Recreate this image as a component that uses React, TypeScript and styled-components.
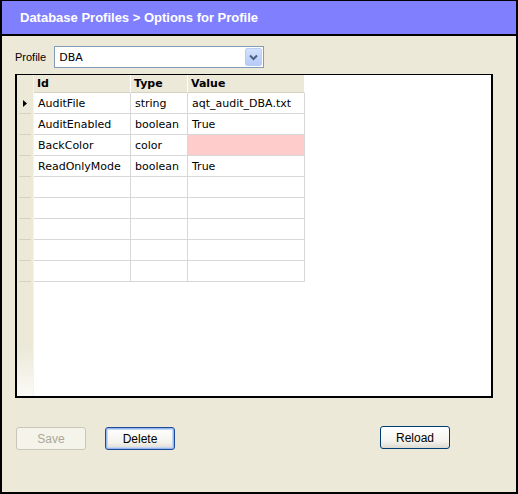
import React from 'react'
import styled, { createGlobalStyle } from 'styled-components'

const GlobalStyle = createGlobalStyle`
  html, body {
    margin: 0;
    padding: 0;
    background: #ece9d8;
  }
`

const Frame = styled.div`
  box-sizing: border-box;
  width: 518px;
  height: 494px;
  border: 1px solid #000;
  border-width: 1px 2px 2px 2px;
  background: #ece9d8;
  display: flex;
  flex-direction: column;
  font-family: 'Liberation Sans', Arial, sans-serif;
  font-size: 11px;
  color: #000;
`

const Header = styled.div`
  height: 33px;
  background: #8080ff;
  border-bottom: 2px solid #000;
  display: flex;
  align-items: center;
  padding-left: 18px;
  color: #fff;
  font-family: 'Liberation Sans', Arial, sans-serif;
  font-weight: bold;
  font-size: 13px;
`

const Body = styled.div`
  flex: 1;
  display: flex;
  flex-direction: column;
  padding: 10px 24px 0 13px;
`

const ProfileRow = styled.div`
  display: flex;
  align-items: center;
  gap: 8px;
  height: 22px;
`

const Select = styled.div`
  box-sizing: border-box;
  width: 210px;
  height: 22px;
  border: 1px solid #7f9db9;
  background: #fff;
  display: flex;
  align-items: center;
  justify-content: space-between;
  padding-left: 4px;
  font-family: 'DejaVu Sans', Tahoma, sans-serif;
  font-size: 11px;
`

const DropButton = styled.div`
  box-sizing: border-box;
  width: 17px;
  height: 18px;
  margin-right: 1px;
  border: 1px solid #b9cdf7;
  border-radius: 2px;
  background: linear-gradient(#d3e0fd, #b6cbf8);
  display: flex;
  align-items: center;
  justify-content: center;
`

const Grid = styled.div`
  box-sizing: border-box;
  margin-top: 6px;
  width: 478px;
  height: 324px;
  border: 2px solid #000;
  border-width: 1px 2px 2px 2px;
  background: #fff;
  display: flex;
`

const RowHeaders = styled.div`
  width: 16px;
  background: linear-gradient(#ece9d8 85%, #fbfaf6);
  border-right: 1px solid #f4f3ee;
  display: flex;
  flex-direction: column;
`

const CornerCell = styled.div`
  height: 18px;
  flex-shrink: 0;
`

const RowHeaderCell = styled.div`
  box-sizing: border-box;
  height: 21px;
  flex-shrink: 0;
  border-bottom: 1px solid #d6d2c2;
  margin: 0 2px;
  display: flex;
  align-items: center;
  justify-content: center;
`

const Columns = styled.div`
  display: flex;
  flex-direction: column;
`

const Row = styled.div`
  display: flex;
`

const HeadCell = styled.div<{ w: number }>`
  box-sizing: border-box;
  width: ${p => p.w}px;
  height: 18px;
  background: #ece9d8;
  border-right: 1px solid #fff;
  border-bottom: 1px solid #d6d2c2;
  padding-left: 3px;
  display: flex;
  align-items: center;
  font-family: 'DejaVu Sans', Verdana, sans-serif;
  font-weight: bold;
  font-size: 11px;
`

const Cell = styled.div<{ w: number; bg?: string }>`
  box-sizing: border-box;
  width: ${p => p.w}px;
  height: 21px;
  background: ${p => p.bg || '#fff'};
  border-right: 1px solid #d8d8d8;
  border-bottom: 1px solid #d8d8d8;
  padding-left: 4px;
  display: flex;
  align-items: center;
  font-family: 'DejaVu Sans', Tahoma, sans-serif;
  font-size: 11px;
  white-space: nowrap;
  overflow: hidden;
`

const ButtonRow = styled.div`
  display: flex;
  align-items: flex-start;
  margin-top: 29px;
  padding-left: 1px;
`

const Button = styled.button<{ focused?: boolean; raised?: boolean }>`
  box-sizing: border-box;
  width: 70px;
  height: 23px;
  margin-top: ${p => (p.raised ? -1 : 0)}px;
  border: 1px solid ${p => (p.focused ? '#1c4b9c' : '#003c74')};
  border-radius: 3px;
  background: linear-gradient(#ffffff, #f3f2ec 70%, #dcd9cf);
  box-shadow: ${p => (p.focused ? 'inset 0 0 0 1px #98b8ec, inset 0 0 0 2px #c4d6f6' : 'none')};
  font-family: 'Liberation Sans', Arial, sans-serif;
  font-size: 12px;
  color: #000;
  padding: 0;
  &:disabled {
    border-color: #c9c7ba;
    color: #aca899;
    background: #f5f4ea;
  }
`

const Spacer = styled.div<{ w: number }>`
  width: ${p => p.w}px;
`

const columns = [
  { name: 'Id', w: 97 },
  { name: 'Type', w: 57 },
  { name: 'Value', w: 117 },
]

const rows: Array<[string, string, string, string?]> = [
  ['AuditFile', 'string', 'aqt_audit_DBA.txt'],
  ['AuditEnabled', 'boolean', 'True'],
  ['BackColor', 'color', '', '#ffcccc'],
  ['ReadOnlyMode', 'boolean', 'True'],
  ['', '', ''],
  ['', '', ''],
  ['', '', ''],
  ['', '', ''],
  ['', '', ''],
]

const App = () => (
  <>
    <GlobalStyle />
    <Frame>
      <Header>Database Profiles &gt; Options for Profile</Header>
      <Body>
        <ProfileRow>
          <span>Profile</span>
          <Select>
            DBA
            <DropButton>
              <svg width="9" height="7" viewBox="0 0 9 7">
                <path d="M1 1.5 L4.5 5 L8 1.5" fill="none" stroke="#4d6185" strokeWidth="2" />
              </svg>
            </DropButton>
          </Select>
        </ProfileRow>
        <Grid>
          <RowHeaders>
            <CornerCell />
            {rows.map((_, i) => (
              <RowHeaderCell key={i}>
                {i === 0 && (
                  <svg width="4" height="7" viewBox="0 0 4 7">
                    <path d="M0 0 L4 3.5 L0 7 Z" fill="#000" />
                  </svg>
                )}
              </RowHeaderCell>
            ))}
          </RowHeaders>
          <Columns>
            <Row>
              {columns.map(c => (
                <HeadCell key={c.name} w={c.w}>
                  {c.name}
                </HeadCell>
              ))}
            </Row>
            {rows.map((r, i) => (
              <Row key={i}>
                <Cell w={97}>{r[0]}</Cell>
                <Cell w={57}>{r[1]}</Cell>
                <Cell w={117} bg={r[3]}>
                  {r[2]}
                </Cell>
              </Row>
            ))}
          </Columns>
        </Grid>
        <ButtonRow>
          <Button disabled>Save</Button>
          <Spacer w={19} />
          <Button focused>Delete</Button>
          <Spacer w={205} />
          <Button raised>Reload</Button>
        </ButtonRow>
      </Body>
    </Frame>
  </>
)

export default App
